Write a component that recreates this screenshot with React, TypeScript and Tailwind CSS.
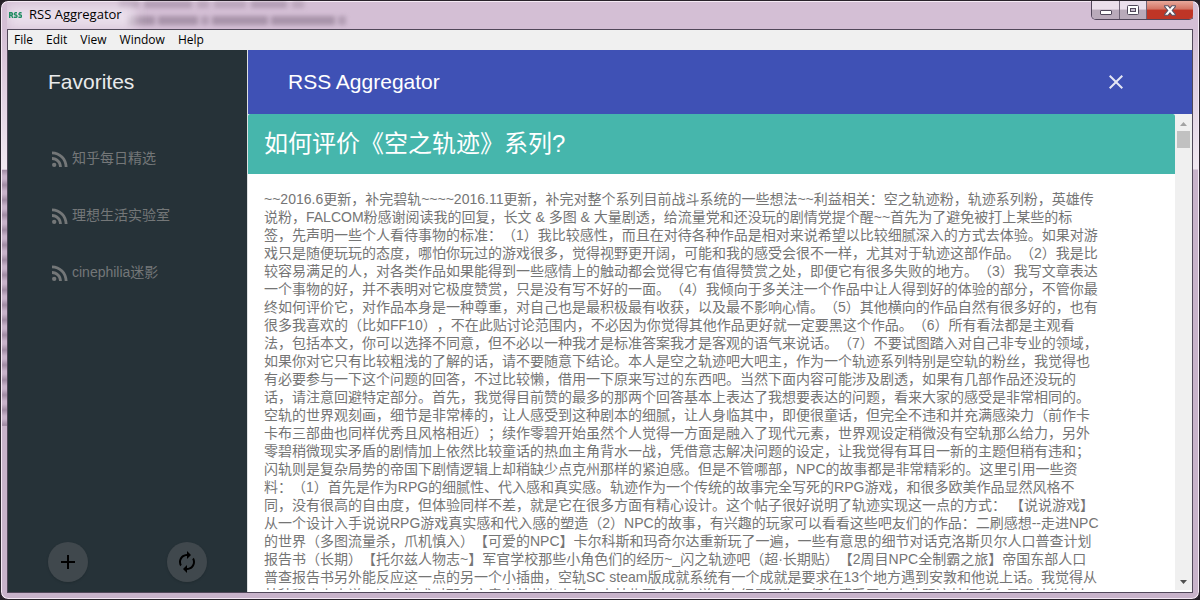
import type { ReactNode } from 'react';

const menus = ['File', 'Edit', 'View', 'Window', 'Help'];
const feeds = ['知乎每日精选', '理想生活实验室', 'cinephilia迷影'];

const lines = [
  '~~2016.6更新，补完碧轨~~~~2016.11更新，补完对整个系列目前战斗系统的一些想法~~利益相关：空之轨迹粉，轨迹系列粉，英雄传',
  '说粉，FALCOM粉感谢阅读我的回复，长文 & 多图 & 大量剧透，给流量党和还没玩的剧情党提个醒~~首先为了避免被打上某些的标',
  '签，先声明一些个人看待事物的标准：（1）我比较感性，而且在对待各种作品是相对来说希望以比较细腻深入的方式去体验。如果对游',
  '戏只是随便玩玩的态度，哪怕你玩过的游戏很多，觉得视野更开阔，可能和我的感受会很不一样，尤其对于轨迹这部作品。（2）我是比',
  '较容易满足的人，对各类作品如果能得到一些感情上的触动都会觉得它有值得赞赏之处，即便它有很多失败的地方。（3）我写文章表达',
  '一个事物的好，并不表明对它极度赞赏，只是没有写不好的一面。（4）我倾向于多关注一个作品中让人得到好的体验的部分，不管你最',
  '终如何评价它，对作品本身是一种尊重，对自己也是最积极最有收获，以及最不影响心情。（5）其他横向的作品自然有很多好的，也有',
  '很多我喜欢的（比如FF10），不在此贴讨论范围内，不必因为你觉得其他作品更好就一定要黑这个作品。（6）所有看法都是主观看',
  '法，包括本文，你可以选择不同意，但不必以一种我才是标准答案我才是客观的语气来说话。（7）不要试图踏入对自己非专业的领域，',
  '如果你对它只有比较粗浅的了解的话，请不要随意下结论。本人是空之轨迹吧大吧主，作为一个轨迹系列特别是空轨的粉丝，我觉得也',
  '有必要参与一下这个问题的回答，不过比较懒，借用一下原来写过的东西吧。当然下面内容可能涉及剧透，如果有几部作品还没玩的',
  '话，请注意回避特定部分。首先，我觉得目前赞的最多的那两个回答基本上表达了我想要表达的问题，看来大家的感受是非常相同的。',
  '空轨的世界观刻画，细节是非常棒的，让人感受到这种剧本的细腻，让人身临其中，即便很童话，但完全不违和并充满感染力（前作卡',
  '卡布三部曲也同样优秀且风格相近）；续作零碧开始虽然个人觉得一方面是融入了现代元素，世界观设定稍微没有空轨那么给力，另外',
  '零碧稍微现实矛盾的剧情加上依然比较童话的热血主角背水一战，凭借意志解决问题的设定，让我觉得有耳目一新的主题但稍有违和；',
  '闪轨则是复杂局势的帝国下剧情逻辑上却稍缺少点克州那样的紧迫感。但是不管哪部，NPC的故事都是非常精彩的。这里引用一些资',
  '料：（1）首先是作为RPG的细腻性、代入感和真实感。轨迹作为一个传统的故事完全写死的RPG游戏，和很多欧美作品显然风格不',
  '同，没有很高的自由度，但体验同样不差，就是它在很多方面有精心设计。这个帖子很好说明了轨迹实现这一点的方式： 【说说游戏】',
  '从一个设计入手说说RPG游戏真实感和代入感的塑造（2）NPC的故事，有兴趣的玩家可以看看这些吧友们的作品：二刷感想--走进NPC',
  '的世界（多图流量杀，爪机慎入）【可爱的NPC】卡尔科斯和玛奇尔达重新玩了一遍，一些有意思的细节对话克洛斯贝尔人口普查计划',
  '报告书（长期）【托尔兹人物志~】军官学校那些小角色们的经历~_闪之轨迹吧（超·长期贴）【2周目NPC全制霸之旅】帝国东部人口',
  '普查报告书另外能反应这一点的另一个小插曲，空轨SC steam版成就系统有一个成就是要求在13个地方遇到安敦和他说上话。我觉得从',
  '某种程度上来说，这个游戏对那个方意者某些出来细，去某些更去细，说是去细是因为，但在感受了去去非跟这某细所在是项某作某上',
];

function RssIcon() {
  return (
    <svg viewBox="4 4 16 16" className="size-4 shrink-0" fill="#747778" aria-hidden="true">
      <circle cx="6.18" cy="17.82" r="2.18" />
      <path d="M4 4.44v2.83c7.03 0 12.73 5.7 12.73 12.73h2.83c0-8.59-6.97-15.56-15.56-15.56zm0 5.66v2.83c3.9 0 7.07 3.17 7.07 7.07h2.83c0-5.47-4.43-9.9-9.9-9.9z" />
    </svg>
  );
}

function RoundButton({ label, children }: { label: string; children: ReactNode }) {
  return (
    <button aria-label={label} className="flex size-10 items-center justify-center rounded-full bg-[#40484d] shadow">
      <svg viewBox="0 0 24 24" className="size-6" fill="#000" aria-hidden="true">
        {children}
      </svg>
    </button>
  );
}

function GlassBackdrop() {
  return (
    <div aria-hidden="true" className="absolute inset-0">
      <div className="absolute inset-0 flex flex-col gap-2 pl-28 opacity-60 blur-[2px]">
        <div className="flex h-[7px] gap-[5px]">
          <span className="w-5 bg-[#9d899f]" />
          <span className="w-12 bg-[#9d899f]" />
          <span className="w-3 bg-[#a995aa]" />
          <span className="w-8 bg-[#a995aa]" />
          <span className="w-9 bg-[#9d899f]" />
          <span className="w-3 bg-[#a995aa]" />
        </div>
        <div className="flex h-[9px] gap-[3px] pl-2">
          <span className="w-7 bg-[#8c788e]" />
          <span className="w-10 bg-[#8c788e]" />
          <span className="w-2 bg-[#9d899f]" />
          <span className="w-14 bg-[#8c788e]" />
          <span className="w-16 bg-[#8c788e]" />
          <span className="w-2 bg-[#9d899f]" />
        </div>
      </div>
      <div className="absolute top-1 left-0 h-6 w-32 bg-[#efe6f0]/80 blur-[6px]" />
    </div>
  );
}

function TitleBar() {
  return (
    <header className="relative flex h-7 shrink-0 items-start justify-between overflow-hidden pl-[2px]">
      <GlassBackdrop />
      <div className="relative flex h-7 items-center gap-[7px]">
        <svg viewBox="0 0 13 6" className="h-[6px] w-[13px]" fill="none" stroke="#208c62" strokeWidth="1.4" aria-hidden="true">
          <path d="M.7 6V.7h2.1q1.2 1.3 0 2.6H.7m1.8 0L3.8 6M8 .7H6.2Q4.4 2 6.2 3h1q1.7 1.2 0 2.3H4.8M12.6.7h-1.8Q9 2 10.8 3h1q1.7 1.2 0 2.3H9.4" />
        </svg>
        <span className="text-[13px] text-black">RSS Aggregator</span>
      </div>
      <div className="relative -mr-px flex h-[19px] overflow-hidden rounded-b-[5px] border border-t-0 border-[#51465a]">
        <button aria-label="Minimize" className="flex w-7 items-center justify-center border-r border-[#6e6375] bg-linear-to-b from-[#eadfeb] from-45% to-[#b9aaba] to-50%">
          <svg viewBox="0 0 12 5" className="mt-1 h-[5px] w-3" aria-hidden="true"><rect x=".5" y=".5" width="11" height="4" rx=".5" fill="#fff" stroke="#50485a" /></svg>
        </button>
        <button aria-label="Maximize" className="flex w-[27px] items-center justify-center border-r border-[#6e6375] bg-linear-to-b from-[#eadfeb] from-45% to-[#b9aaba] to-50%">
          <svg viewBox="0 0 12 10" className="h-[10px] w-3" fill="#fff" stroke="#50485a" aria-hidden="true"><rect x=".5" y=".5" width="11" height="9" rx="1" /><rect x="3.5" y="3.5" width="5" height="3" fill="#cabdcf" /></svg>
        </button>
        <button aria-label="Close window" className="flex w-[46px] items-center justify-center bg-linear-to-b from-[#e7a89b] from-0% via-[#d27363] via-45% to-[#bf3526] to-50%">
          <svg viewBox="0 0 12 11" className="h-[11px] w-3" aria-hidden="true"><path d="M.7.7h3.4L6 3.2 7.9.7h3.4v1.2L8.2 5.5l3.1 3.6v1.2H7.9L6 7.8l-1.9 2.5H.7V9.1l3.1-3.6L.7 1.9Z" fill="#fff" stroke="#555062" strokeWidth="1.1" /></svg>
        </button>
      </div>
    </header>
  );
}

function Sidebar() {
  return (
    <aside className="flex w-60 shrink-0 flex-col border-r border-[#dfe1e2] bg-[#263238]">
      <h2 className="flex h-16 shrink-0 items-center pl-10 text-[21px] font-medium text-[#e9eaeb]">Favorites</h2>
      <nav className="mt-4 flex grow flex-col pl-11">
        {feeds.map((feed) => (
          <a key={feed} href="#" className="flex h-[57px] items-center gap-1 text-[14px] text-[#747778]">
            <RssIcon />
            <span>{feed}</span>
          </a>
        ))}
      </nav>
      <div className="flex justify-between pr-10 pb-[10px] pl-10">
        <RoundButton label="Add feed"><path d="M19 13h-6v6h-2v-6H5v-2h6V5h2v6h6z" /></RoundButton>
        <RoundButton label="Refresh"><path d="M12 6v3l4-4-4-4v3c-4.42 0-8 3.58-8 8 0 1.57.46 3.03 1.24 4.26L6.7 14.8A5.87 5.87 0 0 1 6 12c0-3.31 2.69-6 6-6zm6.76 1.74L17.3 9.2c.44.84.7 1.79.7 2.8 0 3.31-2.69 6-6 6v-3l-4 4 4 4v-3c4.42 0 8-3.58 8-8 0-1.57-.46-3.03-1.24-4.26z" /></RoundButton>
      </div>
    </aside>
  );
}

function ScrollBar() {
  return (
    <div aria-hidden="true" className="flex w-[17px] shrink-0 flex-col items-center bg-[#f0f0f0] py-[6px]">
      <svg viewBox="0 0 7 4" className="mt-[2px] h-1 w-[7px]"><path d="M0 4 3.5 0 7 4z" fill="#a3a3a3" /></svg>
      <div className="mt-[5px] h-[17px] w-[13px] bg-[#c1c1c1]" />
      <svg viewBox="0 0 7 4" className="mt-auto h-1 w-[7px]"><path d="M0 0h7L3.5 4z" fill="#505050" /></svg>
    </div>
  );
}

export default function App() {
  return (
    <div className="h-screen bg-[#252027] font-['Liberation_Sans','Noto_Sans_CJK_SC',sans-serif] [text-spacing-trim:space-all]">
      <div className="relative flex h-full flex-col overflow-hidden rounded-lg border border-[#29232b] bg-linear-to-b from-[#d4bfd5] from-[30px] via-[#f1e8f1] via-[168px] to-[#c8b3ca] to-[169px] px-[6px] pb-[6px] font-['Open_Sans','Noto_Sans_CJK_SC',sans-serif] inset-ring inset-ring-[#f5eaf5]">
        <div aria-hidden="true" className="absolute top-[169px] left-px h-64 w-[5px] bg-[repeating-linear-gradient(#a08ba3_0,#c8b3ca_6px,#c8b3ca_9px,#a08ba3_15px)]" />
        <TitleBar />
        <div className="flex min-h-0 grow flex-col border border-[#51485a]">
          <nav className="flex h-5 shrink-0 items-center gap-[13px] bg-[#f0f0f0] pl-[6px] text-[12px] text-black">
            {menus.map((menu) => <button key={menu}>{menu}</button>)}
          </nav>
          <div className="flex min-h-0 grow bg-white font-['Liberation_Sans','Noto_Sans_CJK_SC',sans-serif]">
            <Sidebar />
            <main className="flex min-w-0 grow flex-col">
              <div className="flex h-16 shrink-0 items-center justify-between bg-[#3f51b5] pr-16 pl-10 text-white">
                <h1 className="text-[21px] font-medium">RSS Aggregator</h1>
                <button aria-label="Close">
                  <svg viewBox="0 0 24 24" className="size-6" fill="#e4e6f5" aria-hidden="true"><path d="M19 6.41 17.59 5 12 10.59 6.41 5 5 6.41 10.59 12 5 17.59 6.41 19 12 13.41 17.59 19 19 17.59 13.41 12z" /></svg>
                </button>
              </div>
              <div className="flex min-h-0 grow pb-[2px]">
                <article className="flex min-w-0 grow flex-col overflow-hidden rounded-t-[2px]">
                  <h2 className="flex h-15 shrink-0 items-center bg-[#46b6ac] pl-4 text-[24px] leading-6 text-white">如何评价《空之轨迹》系列?</h2>
                  <p className="min-h-0 grow overflow-hidden pt-4 pl-4 text-[14px] leading-[18px] whitespace-pre text-[#757575]">{lines.join('\n')}</p>
                </article>
                <ScrollBar />
              </div>
            </main>
          </div>
        </div>
      </div>
    </div>
  );
}
